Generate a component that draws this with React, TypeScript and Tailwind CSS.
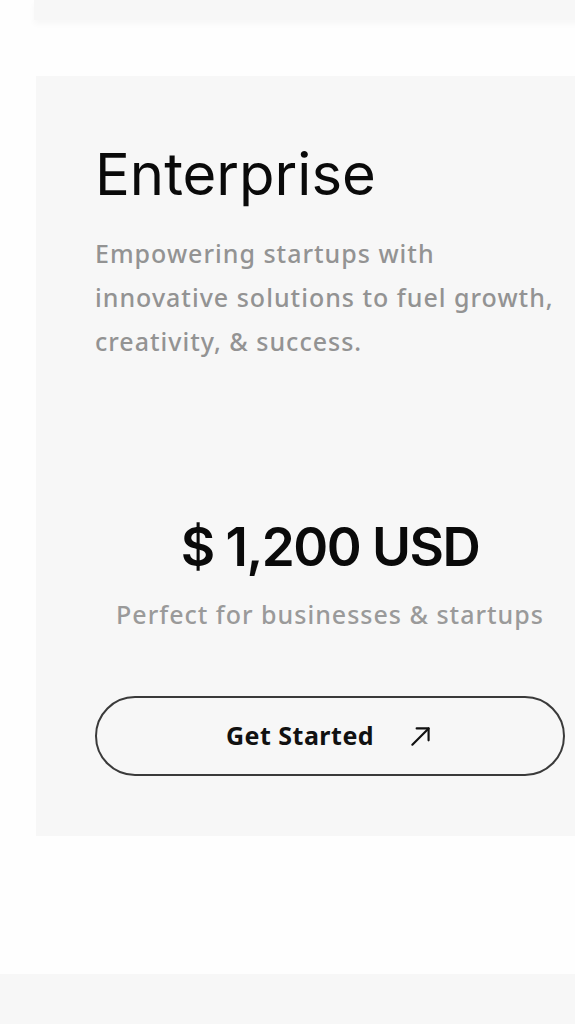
import React from 'react';

function ArrowUpRight() {
  return (
    <svg width="26" height="26" viewBox="0 0 24 24" fill="none" stroke="currentColor" strokeWidth="2" strokeLinecap="round" strokeLinejoin="round">
      <path d="M4 20 L19 5" />
      <path d="M8 5 H19 V16" />
    </svg>
  );
}

export default function App() {
  return (
    <div className="min-h-[1024px] w-[575px] overflow-hidden bg-[#fefefe] flex flex-col" style={{ fontFamily: 'Inter, "Noto Sans", sans-serif' }}>
      {/* previous card tail */}
      <div className="ml-[34px] w-[580px] h-[20px] bg-[#f7f7f7] shadow-[0_4px_6px_rgba(0,0,0,0.03)]" />

      {/* Enterprise card */}
      <div className="mt-[56px] ml-[36px] w-[580px] h-[760px] bg-[#f7f7f7] pl-[59px] pt-[62px] flex flex-col">
        <div className="w-[470px] flex flex-col">
          <h2 className="text-[58px] leading-[72px] font-normal text-[#0a0a0a] tracking-[0px]">Enterprise</h2>
          <p className="mt-[21px] text-[25px] leading-[44px] text-[#939393] font-medium tracking-[1px] w-[480px]" style={{ fontFamily: '"Noto Sans", sans-serif' }}>
            Empowering startups with innovative solutions to fuel growth, creativity, &amp; success.
          </p>

          <div className="mt-[152px] flex flex-col items-center">
            <div className="text-[53px] leading-[64px] font-semibold text-[#0a0a0a] tracking-[-1.5px]">$ 1,200 USD</div>
            <div className="mt-[18px] text-[25px] leading-[34px] text-[#9a9a9a] font-medium tracking-[1px]" style={{ fontFamily: '"Noto Sans", sans-serif' }}>
              Perfect for businesses &amp; startups
            </div>
          </div>

          <button className="mt-[65px] h-[80px] w-[470px] rounded-full border-2 border-[#3a3a3a] flex items-center justify-center gap-[34px] text-[#111]">
            <span className="text-[25px] font-bold tracking-[0.5px]" style={{ fontFamily: '"Noto Sans", sans-serif' }}>Get Started</span>
            <ArrowUpRight />
          </button>
        </div>
      </div>

      <div className="mt-[138px] h-[50px] w-full bg-[#f7f7f7]" />
    </div>
  );
}
